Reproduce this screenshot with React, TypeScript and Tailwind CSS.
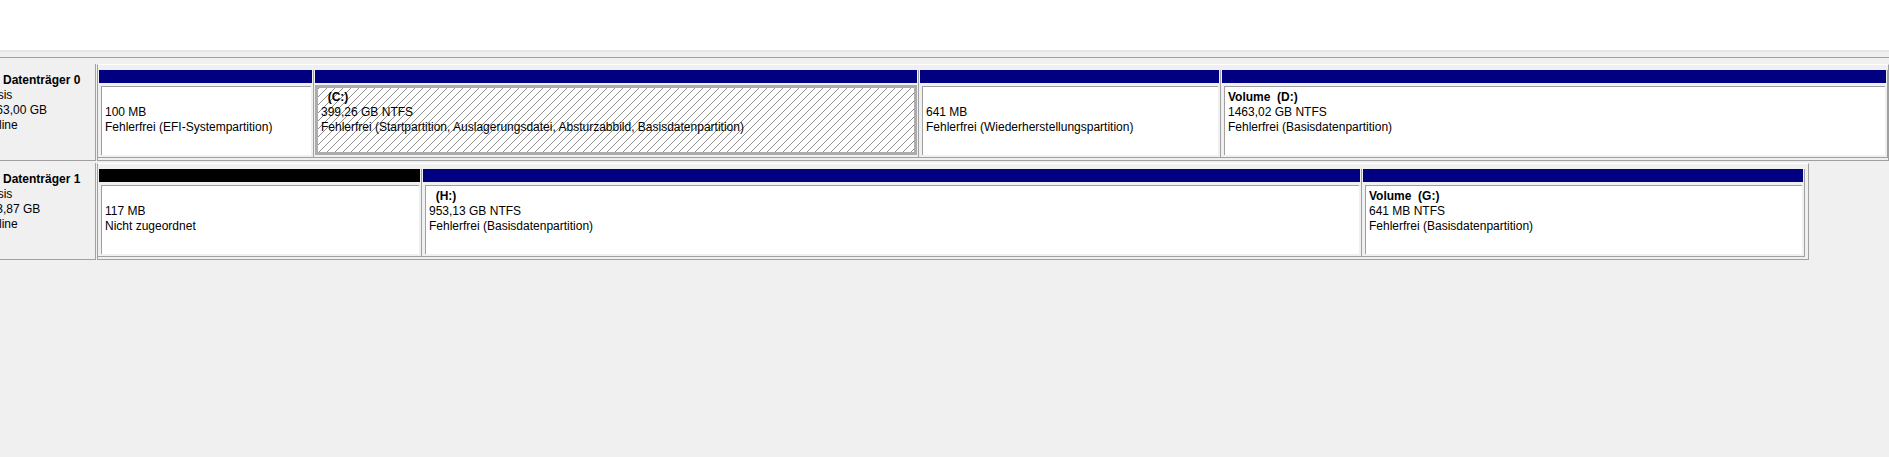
import React from "react";

interface Partition {
  width: string;
  bar: string;
  label?: string;
  size: string;
  status: string;
  selected?: boolean;
}

interface Disk {
  name: string;
  kind: string;
  capacity: string;
  state: string;
  area: string;
  partitions: Partition[];
}

const disks: Disk[] = [
  {
    name: "Datenträger 0",
    kind: "Basis",
    capacity: "1863,00 GB",
    state: "Online",
    area: "flex-1",
    partitions: [
      {
        width: "w-[216px]",
        bar: "bg-[#000080]",
        size: "100 MB",
        status: "Fehlerfrei (EFI-Systempartition)",
      },
      {
        width: "w-[605px]",
        bar: "bg-[#000080]",
        label: "  (C:)",
        size: "399,26 GB NTFS",
        status:
          "Fehlerfrei (Startpartition, Auslagerungsdatei, Absturzabbild, Basisdatenpartition)",
        selected: true,
      },
      {
        width: "w-[302px]",
        bar: "bg-[#000080]",
        size: "641 MB",
        status: "Fehlerfrei (Wiederherstellungspartition)",
      },
      {
        width: "flex-1 min-w-0",
        bar: "bg-[#000080]",
        label: "Volume  (D:)",
        size: "1463,02 GB NTFS",
        status: "Fehlerfrei (Basisdatenpartition)",
      },
    ],
  },
  {
    name: "Datenträger 1",
    kind: "Basis",
    capacity: "953,87 GB",
    state: "Online",
    area: "w-[1712px] pr-[3px]",
    partitions: [
      {
        width: "w-[324px]",
        bar: "bg-black",
        size: "117 MB",
        status: "Nicht zugeordnet",
      },
      {
        width: "w-[940px]",
        bar: "bg-[#000080]",
        label: "  (H:)",
        size: "953,13 GB NTFS",
        status: "Fehlerfrei (Basisdatenpartition)",
      },
      {
        width: "w-[443px]",
        bar: "bg-[#000080]",
        label: "Volume  (G:)",
        size: "641 MB NTFS",
        status: "Fehlerfrei (Basisdatenpartition)",
      },
    ],
  },
];

const PartitionText: React.FC<{ p: Partition }> = ({ p }) => (
  <>
    <div className="h-[15px] font-bold whitespace-pre">{p.label ?? ""}</div>
    <div className="h-[15px] whitespace-pre">{p.size}</div>
    <div className="h-[15px] whitespace-pre">{p.status}</div>
  </>
);

const DiskRow: React.FC<{ disk: Disk }> = ({ disk }) => (
  <div className="flex h-[97px]">
    {/* label column is scrolled, so the left part is cut off */}
    <div className="w-[96px] shrink-0 overflow-hidden border-r border-b border-[#a0a0a0] pt-[9px]">
      <div className="ml-[-17px] whitespace-nowrap">
        <div className="h-[15px] pl-[20px] font-bold">{disk.name}</div>
        <div className="h-[15px]">{disk.kind}</div>
        <div className="h-[15px]">{disk.capacity}</div>
        <div className="h-[15px]">{disk.state}</div>
      </div>
    </div>

    <div
      className={`${disk.area} ml-[1px] border border-[#a0a0a0] border-t-white pt-[5px] shrink-0`}
    >
      <div className="flex h-[88px] border-b border-[#a0a0a0]">
        {disk.partitions.map((p, i) => (
          <div
            key={i}
            className={`${p.width} shrink-0 flex flex-col px-[1px] border-r border-[#a0a0a0]`}
          >
            <div className={`h-[13px] ${p.bar}`} />
            {p.selected ? (
              <div className="mt-[2px] h-[70px] overflow-hidden border-[3px] border-[#acacac] bg-[repeating-linear-gradient(135deg,#8f8f8f_0px,#8f8f8f_1px,#ffffff_1px,#ffffff_5.66px)] pl-[3px] pt-[2px]">
                <PartitionText p={p} />
              </div>
            ) : (
              <div className="mt-[3px] ml-[2px] mr-[1px] h-[69px] overflow-hidden border-l border-t border-[#a0a0a0] bg-white pl-[3px] pt-[3px]">
                <PartitionText p={p} />
              </div>
            )}
          </div>
        ))}
      </div>
    </div>
  </div>
);

export default function App() {
  return (
    <div className="w-[1889px] h-[457px] overflow-hidden bg-[#f0f0f0] text-[12px] leading-[15px] text-black font-['Segoe_UI','Liberation_Sans',Arial,sans-serif]">
      <div className="h-[50px] bg-white" />
      <div className="h-[8px] border-t-2 border-b border-t-[#e6e6e6] border-b-[#a0a0a0]" />
      <div className="flex flex-col gap-[2px] pt-[6px]">
        {disks.map((d) => (
          <DiskRow key={d.name} disk={d} />
        ))}
      </div>
    </div>
  );
}
